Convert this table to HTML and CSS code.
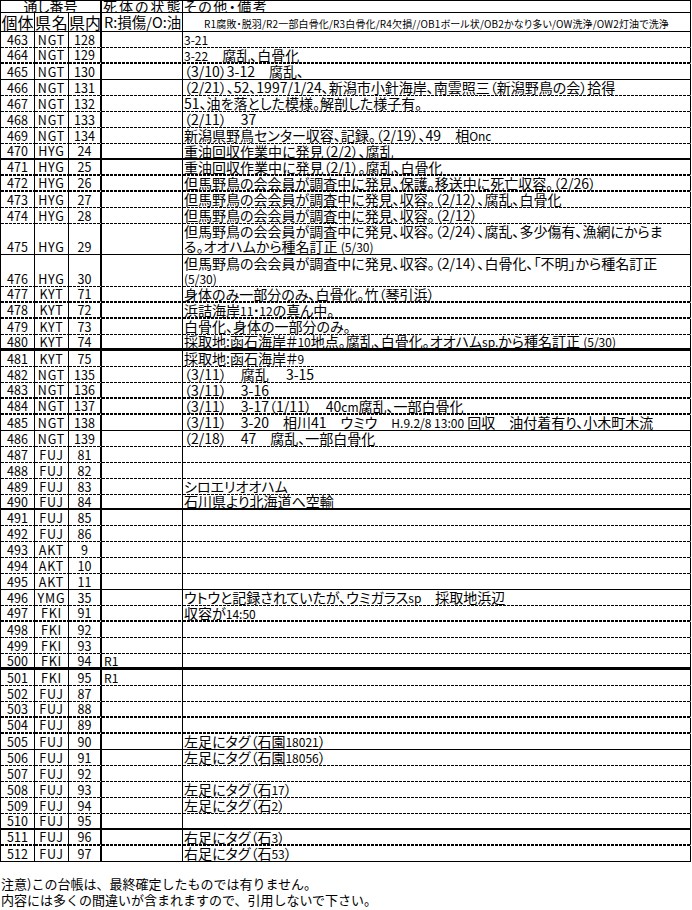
FILE: index.html
```html
<!DOCTYPE html>
<html lang="ja">
<head>
<meta charset="utf-8">
<title>台帳</title>
<link rel="stylesheet" href="styles.css">
</head>
<body>
<table class="sheet">
<colgroup><col class="c1"><col class="c2"><col class="c3"><col class="c4"><col class="c5"></colgroup>
<tr class="h1"><td colspan="3" class="k3 ctr">通し番号</td><td class="hd4">死体の状態</td><td class="hd5">その他・備考</td></tr>
<tr class="h2"><td class="ctr">個体</td><td class="ctr">県名</td><td class="k3 ctr">県内</td><td class="hd4b">R:損傷/O:油</td><td class="legend">R1腐敗・脱羽/R2一部白骨化/R3白骨化/R4欠損//OB1ボール状/OB2かなり多い/OW洗浄/OW2灯油で洗浄</td></tr>
<tr class="d"><td>463</td><td>NGT</td><td class="k3">128</td><td></td><td class="n"><span class="s">3-21</span></td></tr>
<tr class="D"><td>464</td><td>NGT</td><td class="k3">129</td><td></td><td class="n"><span class="s">3-22</span>　腐乱、白骨化</td></tr>
<tr class="s"><td>465</td><td>NGT</td><td class="k3">130</td><td></td><td class="n">（3/10）3-12　腐乱、</td></tr>
<tr class="d"><td>466</td><td>NGT</td><td class="k3">131</td><td></td><td class="n">（2/21）、52、1997/1/24、新潟市小針海岸、南雲照三（新潟野鳥の会）拾得</td></tr>
<tr class="d"><td>467</td><td>NGT</td><td class="k3">132</td><td></td><td class="n">51、油を落とした模様。解剖した様子有。</td></tr>
<tr class="d"><td>468</td><td>NGT</td><td class="k3">133</td><td></td><td class="n">（2/11）　37</td></tr>
<tr class="d"><td>469</td><td>NGT</td><td class="k3">134</td><td></td><td class="n">新潟県野鳥センター収容、記録。（2/19）、49　相<span class="s">Onc</span></td></tr>
<tr class="t"><td>470</td><td>HYG</td><td class="k3">24</td><td></td><td class="n">重油回収作業中に発見（2/2）、腐乱</td></tr>
<tr class="D"><td>471</td><td>HYG</td><td class="k3">25</td><td></td><td class="n">重油回収作業中に発見（2/1）。腐乱、白骨化</td></tr>
<tr class="D"><td>472</td><td>HYG</td><td class="k3">26</td><td></td><td class="n">但馬野鳥の会会員が調査中に発見、保護。移送中に死亡収容。（2/26）</td></tr>
<tr class="d"><td>473</td><td>HYG</td><td class="k3">27</td><td></td><td class="n">但馬野鳥の会会員が調査中に発見、収容。（2/12）、腐乱、白骨化</td></tr>
<tr class="d"><td>474</td><td>HYG</td><td class="k3">28</td><td></td><td class="n">但馬野鳥の会会員が調査中に発見、収容。（2/12）</td></tr>
<tr class="s dbl"><td>475</td><td>HYG</td><td class="k3">29</td><td></td><td class="n">但馬野鳥の会会員が調査中に発見、収容。（2/24）、腐乱、多少傷有、漁網にからま<br>る。オオハムから種名訂正 <span class="s">(5/30)</span></td></tr>
<tr class="d dbl2"><td>476</td><td>HYG</td><td class="k3">30</td><td></td><td class="n">但馬野鳥の会会員が調査中に発見、収容。（2/14）、白骨化、「不明」から種名訂正<br><span class="s">(5/30)</span></td></tr>
<tr class="D"><td>477</td><td>KYT</td><td class="k3">71</td><td></td><td class="n">身体のみ一部分のみ、白骨化。竹（琴引浜）</td></tr>
<tr class="D"><td>478</td><td>KYT</td><td class="k3">72</td><td></td><td class="n">浜詰海岸<span class="s">11・12</span>の真ん中。</td></tr>
<tr class="d"><td>479</td><td>KYT</td><td class="k3">73</td><td></td><td class="n">白骨化、身体の一部分のみ。</td></tr>
<tr class="T"><td>480</td><td>KYT</td><td class="k3">74</td><td></td><td class="n">採取地:函石海岸＃<span class="s">10</span>地点。腐乱、白骨化。オオハム<span class="s">sp.</span>から種名訂正 <span class="s">(5/30)</span></td></tr>
<tr class="d"><td>481</td><td>KYT</td><td class="k3">75</td><td></td><td class="n">採取地:函石海岸＃<span class="s">9</span></td></tr>
<tr class="d"><td>482</td><td>NGT</td><td class="k3">135</td><td></td><td class="n">（3/11）　腐乱　 3-15</td></tr>
<tr class="D"><td>483</td><td>NGT</td><td class="k3">136</td><td></td><td class="n">（3/11）　3-16</td></tr>
<tr class="D"><td>484</td><td>NGT</td><td class="k3">137</td><td></td><td class="n">（3/11）　3-17（1/11）　40<span class="s">cm</span>腐乱、一部白骨化</td></tr>
<tr class="s"><td>485</td><td>NGT</td><td class="k3">138</td><td></td><td class="n">（3/11）　3-20　相川41　ウミウ　<span class="s">H.9.2/8 13:00</span> 回収　油付着有り、小木町木流</td></tr>
<tr class="d"><td>486</td><td>NGT</td><td class="k3">139</td><td></td><td class="n">（2/18）　47　腐乱、一部白骨化</td></tr>
<tr class="d"><td>487</td><td>FUJ</td><td class="k3">81</td><td></td><td class="n"></td></tr>
<tr class="d"><td>488</td><td>FUJ</td><td class="k3">82</td><td></td><td class="n"></td></tr>
<tr class="d"><td>489</td><td>FUJ</td><td class="k3">83</td><td></td><td class="n">シロエリオオハム</td></tr>
<tr class="t short"><td>490</td><td>FUJ</td><td class="k3">84</td><td></td><td class="n">石川県より北海道へ空輸</td></tr>
<tr class="d"><td>491</td><td>FUJ</td><td class="k3">85</td><td></td><td class="n"></td></tr>
<tr class="d"><td>492</td><td>FUJ</td><td class="k3">86</td><td></td><td class="n"></td></tr>
<tr class="d"><td>493</td><td>AKT</td><td class="k3">9</td><td></td><td class="n"></td></tr>
<tr class="d"><td>494</td><td>AKT</td><td class="k3">10</td><td></td><td class="n"></td></tr>
<tr class="s"><td>495</td><td>AKT</td><td class="k3">11</td><td></td><td class="n"></td></tr>
<tr class="d"><td>496</td><td>YMG</td><td class="k3">35</td><td></td><td class="n">ウトウと記録されていたが、ウミガラス<span class="s">sp</span>　採取地浜辺</td></tr>
<tr class="D"><td>497</td><td>FKI</td><td class="k3">91</td><td></td><td class="n">収容が<span class="s">14:50</span></td></tr>
<tr class="d"><td>498</td><td>FKI</td><td class="k3">92</td><td></td><td class="n"></td></tr>
<tr class="d"><td>499</td><td>FKI</td><td class="k3">93</td><td></td><td class="n"></td></tr>
<tr class="T"><td>500</td><td>FKI</td><td class="k3">94</td><td class="r">R1</td><td class="n"></td></tr>
<tr class="d"><td>501</td><td>FKI</td><td class="k3">95</td><td class="r">R1</td><td class="n"></td></tr>
<tr class="d"><td>502</td><td>FUJ</td><td class="k3">87</td><td></td><td class="n"></td></tr>
<tr class="D"><td>503</td><td>FUJ</td><td class="k3">88</td><td></td><td class="n"></td></tr>
<tr class="D"><td>504</td><td>FUJ</td><td class="k3">89</td><td></td><td class="n"></td></tr>
<tr class="s"><td>505</td><td>FUJ</td><td class="k3">90</td><td></td><td class="n">左足にタグ（石園<span class="s">18021</span>）</td></tr>
<tr class="d"><td>506</td><td>FUJ</td><td class="k3">91</td><td></td><td class="n">左足にタグ（石園<span class="s">18056</span>）</td></tr>
<tr class="d"><td>507</td><td>FUJ</td><td class="k3">92</td><td></td><td class="n"></td></tr>
<tr class="d"><td>508</td><td>FUJ</td><td class="k3">93</td><td></td><td class="n">左足にタグ（石<span class="s">17</span>）</td></tr>
<tr class="d"><td>509</td><td>FUJ</td><td class="k3">94</td><td></td><td class="n">左足にタグ（石<span class="s">2</span>）</td></tr>
<tr class="t"><td>510</td><td>FUJ</td><td class="k3">95</td><td></td><td class="n"></td></tr>
<tr class="D"><td>511</td><td>FUJ</td><td class="k3">96</td><td></td><td class="n">右足にタグ（石<span class="s">3</span>）</td></tr>
<tr class="s"><td>512</td><td>FUJ</td><td class="k3">97</td><td></td><td class="n">右足にタグ（石<span class="s">53</span>）</td></tr>
</table>
<div class="note">
<div>注意)この台帳は、最終確定したものでは有りません。</div>
<div>内容には多くの間違いが含まれますので、引用しないで下さい。</div>
</div>
</body>
</html>
```

FILE: styles.css
```css
html, body {
  margin: 0;
  padding: 0;
  background: #fff;
  color: #000;
  font-family: "Noto Sans CJK JP", sans-serif;
}

.sheet {
  border-collapse: separate;
  border-spacing: 0;
  table-layout: fixed;
  width: 691px;
  border-top: 1px solid #000;
  border-left: 1px solid #000;
}

.c1 { width: 34px; }
.c2 { width: 34px; }
.c3 { width: 33px; }
.c4 { width: 81px; }
.c5 { width: 508px; }

.sheet td {
  padding: 0;
  border-right: 1px solid #000;
  border-bottom: 1px solid transparent;
  background-origin: border-box;
  background-repeat: no-repeat;
  background-position: left bottom;
  white-space: nowrap;
  vertical-align: bottom;
  text-align: center;
  font-size: 12.5px;
  line-height: 15px;
  font-feature-settings: "palt";
}

.sheet td.k3 { border-right-width: 2px; }

.sheet td:nth-child(2) { letter-spacing: 0.8px; }

.sheet td.n,
.sheet td.r {
  text-align: left;
  padding-left: 1px;
  font-size: 14px;
}

.sheet td.r { font-size: 12px; padding-left: 2px; }

.s {
  font-size: 12px;
  line-height: 0;
}

/* header rows */
.h1 td {
  font-size: 14px;
  line-height: 11px;
  border-bottom: 1px solid #000;
  vertical-align: bottom;
  overflow: hidden;
}
.h1 td.hd4 { letter-spacing: 2px; text-align: left; padding-left: 1px; }
.h1 td.hd5 { letter-spacing: 1.5px; text-align: left; padding-left: 1px; }

.h2 td {
  font-size: 16px;
  line-height: 18px;
  border-bottom: 1px solid #000;
}
.h2 td.hd4b { font-size: 14.5px; text-align: left; padding-left: 2px; }
.h2 td.legend {
  font-size: 10px;
  line-height: 14px;
  letter-spacing: 0.15px;
  text-align: center;
}

/* row bottom borders */
.d td {
  background-image: repeating-linear-gradient(90deg, #000 0 3px, transparent 3px 4px);
  background-size: 100% 1px;
}
.D td {
  border-bottom-width: 2px;
  line-height: 14px;
  background-image: repeating-linear-gradient(90deg, #000 0 3px, transparent 3px 4px);
  background-size: 100% 2px;
}
.s td {
  border-bottom: 1px solid #000;
}
.t td {
  border-bottom: 2px solid #000;
  line-height: 14px;
}
.T td {
  border-bottom: 3px solid #000;
  line-height: 13px;
}
.short td { line-height: 13px; }
.dbl2 td { height: 31px; }

.note {
  margin-top: 14px;
  font-size: 13px;
  line-height: 16px;
  padding-left: 1px;
}
```
